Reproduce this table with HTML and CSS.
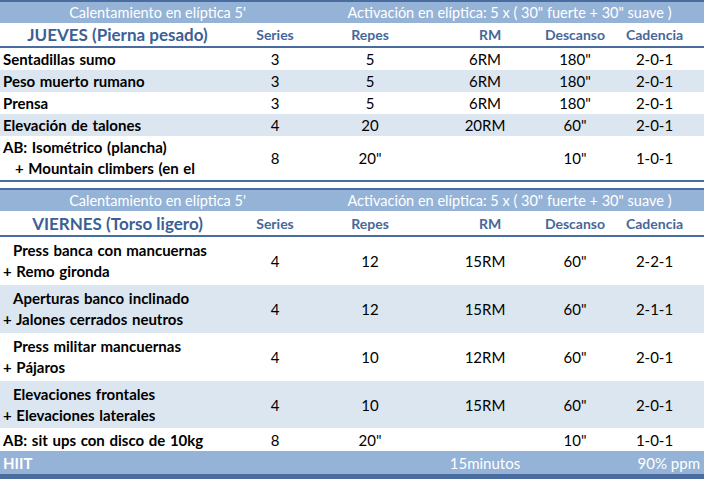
FILE: index.html
```html
<!DOCTYPE html>
<html lang="es">
<head>
<meta charset="utf-8">
<link rel="stylesheet" href="styles.css">
</head>
<body>
<div class="sheet">
  <section class="block">
    <div class="row warm">
      <div class="span-a">Calentamiento en elíptica 5'</div>
      <div class="span-b">Activación en elíptica: 5 x ( 30" fuerte + 30" suave )</div>
    </div>
    <div class="row title">
      <div class="c name day">JUEVES (Pierna pesado)</div>
      <div class="c">Series</div>
      <div class="c">Repes</div>
      <div class="c rmh">RM</div>
      <div class="c">Descanso</div>
      <div class="c">Cadencia</div>
    </div>
    <div class="row r22">
      <div class="c name">Sentadillas sumo</div>
      <div class="c">3</div><div class="c">5</div><div class="c">6RM</div><div class="c">180"</div><div class="c">2-0-1</div>
    </div>
    <div class="row r22 alt">
      <div class="c name">Peso muerto rumano</div>
      <div class="c">3</div><div class="c">5</div><div class="c">6RM</div><div class="c">180"</div><div class="c">2-0-1</div>
    </div>
    <div class="row r22">
      <div class="c name">Prensa</div>
      <div class="c">3</div><div class="c">5</div><div class="c">6RM</div><div class="c">180"</div><div class="c">2-0-1</div>
    </div>
    <div class="row r22 alt">
      <div class="c name">Elevación de talones</div>
      <div class="c">4</div><div class="c">20</div><div class="c">20RM</div><div class="c">60"</div><div class="c">2-0-1</div>
    </div>
    <div class="row r44 last">
      <div class="c name two"><span>AB: Isométrico (plancha)</span><span class="ind2">+ Mountain climbers (en el</span></div>
      <div class="c">8</div><div class="c">20"</div><div class="c"></div><div class="c">10"</div><div class="c">1-0-1</div>
    </div>
  </section>

  <section class="block second">
    <div class="row warm">
      <div class="span-a">Calentamiento en elíptica 5'</div>
      <div class="span-b">Activación en elíptica: 5 x ( 30" fuerte + 30" suave )</div>
    </div>
    <div class="row title t2">
      <div class="c name day">VIERNES (Torso ligero)</div>
      <div class="c">Series</div>
      <div class="c">Repes</div>
      <div class="c rmh">RM</div>
      <div class="c">Descanso</div>
      <div class="c">Cadencia</div>
    </div>
    <div class="row r48">
      <div class="c name two"><span class="ind1">Press banca con mancuernas</span><span>+ Remo gironda</span></div>
      <div class="c">4</div><div class="c">12</div><div class="c">15RM</div><div class="c">60"</div><div class="c">2-2-1</div>
    </div>
    <div class="row r48 alt">
      <div class="c name two"><span class="ind1">Aperturas banco inclinado</span><span>+ Jalones cerrados neutros</span></div>
      <div class="c">4</div><div class="c">12</div><div class="c">15RM</div><div class="c">60"</div><div class="c">2-1-1</div>
    </div>
    <div class="row r48">
      <div class="c name two"><span class="ind1">Press militar mancuernas</span><span>+ Pájaros</span></div>
      <div class="c">4</div><div class="c">10</div><div class="c">12RM</div><div class="c">60"</div><div class="c">2-0-1</div>
    </div>
    <div class="row r47 alt">
      <div class="c name two"><span class="ind1">Elevaciones frontales</span><span>+ Elevaciones laterales</span></div>
      <div class="c">4</div><div class="c">10</div><div class="c">15RM</div><div class="c">60"</div><div class="c">2-0-1</div>
    </div>
    <div class="row r23">
      <div class="c name">AB: sit ups con disco de 10kg</div>
      <div class="c">8</div><div class="c">20"</div><div class="c"></div><div class="c">10"</div><div class="c">1-0-1</div>
    </div>
    <div class="row hiit">
      <div class="c name">HIIT</div>
      <div class="c"></div><div class="c"></div><div class="c">15minutos</div><div class="c"></div><div class="c ppm">90% ppm</div>
    </div>
  </section>
</div>
</body>
</html>
```

FILE: styles.css
```css
html, body {
  margin: 0;
  padding: 0;
  background: #ffffff;
}
.sheet {
  width: 704px;
  height: 479px;
  overflow: hidden;
  font-family: "Lato", "Noto Sans", sans-serif;
  color: #000000;
}
.block {
  border-top: 2px solid #4b6c9e;
}
.block.second {
  margin-top: 6px;
  border-bottom: 5px solid #4b6c9e;
}
.row {
  display: grid;
  grid-template-columns: 235px 80px 110px 120px 60px 99px;
  align-items: center;
  font-size: 15px;
}
.c {
  text-align: center;
  white-space: nowrap;
}
.name {
  text-align: left;
  font-weight: bold;
  padding-left: 3px;
  word-spacing: 1px;
}
.warm {
  height: 21px;
  background: #95b3d7;
  color: #ffffff;
  grid-template-columns: 315px 389px;
  font-size: 14.5px;
}
.span-a, .span-b {
  text-align: center;
  white-space: nowrap;
}
.title {
  height: 23px;
  border-bottom: 2px solid #4b6c9e;
  color: #47679a;
  font-weight: bold;
  font-size: 14px;
}
.title .c {
  display: flex;
  justify-content: center;
}
.title.t2 {
  height: 24px;
}
.title .day {
  font-size: 17px;
  color: #3c5f96;
  padding-left: 0;
  word-spacing: 0;
}
.rmh {
  padding-left: 10px;
}
.r22 { height: 22px; }
.r23 { height: 23px; }
.r44 { height: 44px; }
.r48 { height: 48px; }
.r47 { height: 47px; }
.last {
  border-bottom: 2px solid #4b6c9e;
}
.alt {
  background: #dce6f1;
}
.two {
  display: flex;
  flex-direction: column;
  line-height: 21px;
}
.ind1 { padding-left: 10px; }
.ind2 { padding-left: 12px; }
.hiit {
  height: 23px;
  background: #95b3d7;
  color: #ffffff;
}
.ppm {
  text-align: right;
  padding-right: 4px;
}
```
